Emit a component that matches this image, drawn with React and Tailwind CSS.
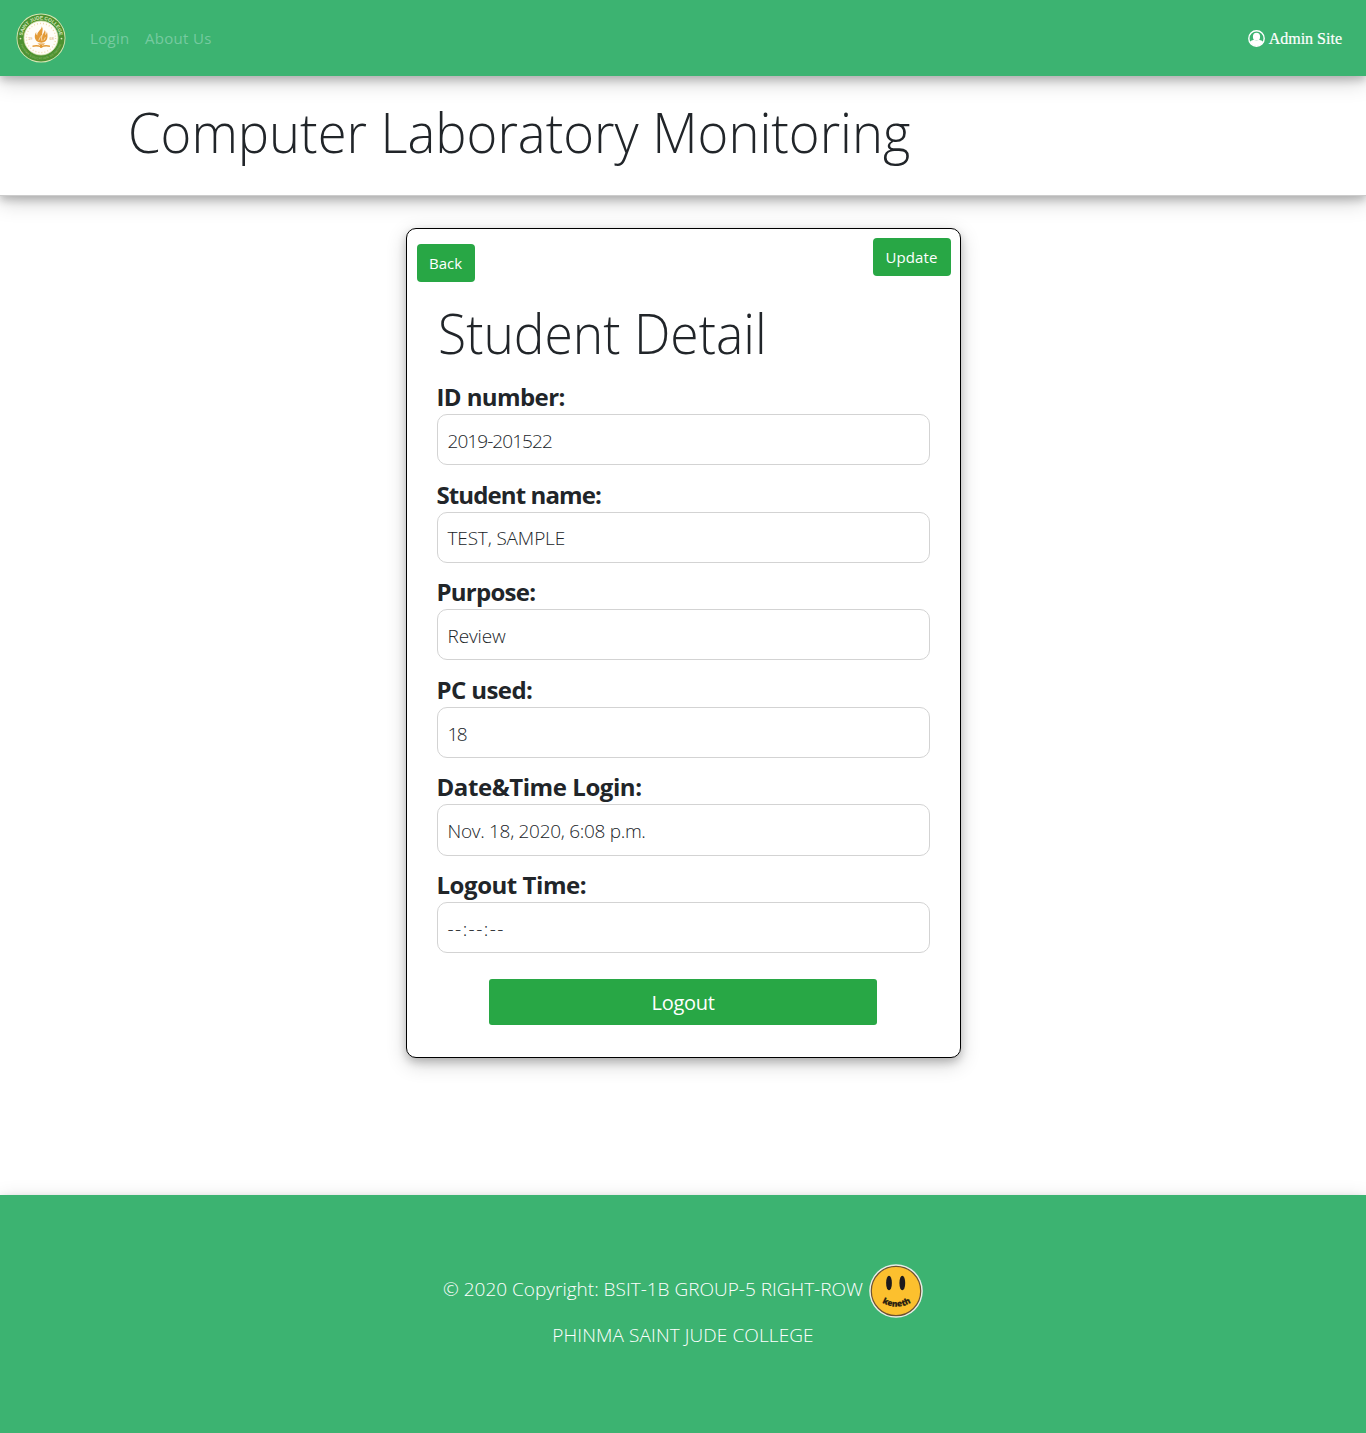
import React from "react";

const fields = [
  { label: "ID number:", value: "2019-201522", lw: "tracking-[-0.6px]", vw: "tracking-[-0.93px]" },
  { label: "Student name:", value: "TEST, SAMPLE", lw: "tracking-[-0.9px]", vw: "tracking-[-0.15px]" },
  { label: "Purpose:", value: "Review", lw: "tracking-[-0.75px]", vw: "tracking-[-0.15px]" },
  { label: "PC used:", value: "18", lw: "tracking-[-0.6px]", vw: "tracking-[-1.5px]" },
  { label: "Date&Time Login:", value: "Nov. 18, 2020, 6:08 p.m.", lw: "tracking-[-0.43px]", vw: "tracking-[-0.3px]" },
  { label: "Logout Time:", value: "--:--:--", lw: "tracking-[-0.45px]", vw: "tracking-[1.45px]" },
];

function CollegeSeal() {
  return (
    <svg viewBox="0 0 50 50" className="block size-[50px]" aria-label="Saint Jude College">
      <defs>
        <path id="seal-top" d="M6.6 27a18.500 18.500 0 1 1 36.800 0" />
        <path id="seal-bottom" d="M3.600 25a21.400 21.400 0 0 0 42.800 0" />
      </defs>
      <circle cx="25" cy="25" r="24.500" fill="#d9e6b4" />
      <circle cx="25" cy="25" r="23.600" fill="#4c9130" />
      <circle cx="25" cy="25" r="17" fill="#fffdf8" stroke="#d8dfae" strokeWidth=".8" />
      <circle cx="25" cy="25" r="14.600" fill="none" stroke="#f2dcb0" strokeWidth="1.400" strokeDasharray="1 2.06" />
      <text fontFamily="Liberation Sans" fontWeight="700" fontSize="5" fill="#d5e5ba">
        <textPath href="#seal-top" startOffset="50%" textAnchor="middle" textLength="53">SAINT JUDE COLLEGE</textPath>
      </text>
      <text fontFamily="Liberation Sans" fontSize="3" fill="#98bd76">
        <textPath href="#seal-bottom" startOffset="50%" textAnchor="middle" textLength="54">PHINMA EDUCATION NETWORK</textPath>
      </text>
      <circle cx="4.500" cy="25.600" r=".9" fill="#dbe8c0" />
      <circle cx="45.500" cy="25.600" r=".9" fill="#dbe8c0" />
      <g fill="#e39a36">
        <path d="M25.600 13.200c.8 3.200-5 5.200-4.300 9.300-1-.9-1.300-2-1-3.500-2 2.800-2.200 6.600.6 9.300 2.500 1.900 6.400 1.900 8.800-.2 2.500-2.500 2-6.500 1.200-9.500-.2 1.900-.9 2.900-1.700 3.600.6-2.300.4-4-.4-5.300-.4 2.300-1.800 3.500-2.600 5.600-.6-2.600 1.700-6.300-.6-9.300Z" />
        <path d="M21.500 30.500h7.800l-1.800 1.200h-4.200ZM16.500 32.600q5-1.200 8.700.6 3.700-1.800 8.700-.6v1.300q-5-1-8.700.7-3.700-1.700-8.700-.7Z" />
        <path d="M24 32h2.300v2.800H24Z" />
      </g>
      <path d="M22.700 27.500q1.200-3.200 3.300-5.300-1 3.200 0 5.700M27.700 27.300q1.200-1.200 1.600-3" stroke="#fff3dc" strokeWidth=".7" fill="none" />
      <text x="14.300" y="26.900" textAnchor="middle" fontFamily="Liberation Sans" fontSize="3.800" fill="#d9a860">19</text>
      <text x="35.700" y="26.900" textAnchor="middle" fontFamily="Liberation Sans" fontSize="3.800" fill="#d9a860">68</text>
    </svg>
  );
}

function AdminIcon() {
  return (
    <svg viewBox="0 0 17 17" className="block size-[17px]">
      <defs>
        <clipPath id="admin-clip">
          <circle cx="8.500" cy="8.500" r="7.600" />
        </clipPath>
      </defs>
      <circle cx="8.500" cy="8.500" r="7.700" fill="none" stroke="#fff" strokeWidth="1.400" />
      <ellipse cx="8.500" cy="6.700" rx="3.600" ry="3.900" fill="#fff" />
      <path clipPath="url(#admin-clip)" d="M1.500 17v-4.600q1-2.200 4.300-2.700 2.700 1.500 5.400 0 3.300.5 4.300 2.700V17Z" fill="#fff" />
    </svg>
  );
}

function Smiley() {
  return (
    <svg viewBox="0 0 54 54" className="block size-[54px]">
      <defs>
        <path id="smile" d="M11 37.500Q27.500 48 44 37.500" />
      </defs>
      <circle cx="27" cy="27" r="26.800" fill="#e9eee8" />
      <circle cx="27" cy="27" r="24.700" fill="#fcc02e" stroke="#6d5230" strokeWidth="1.200" />
      <ellipse cx="20" cy="19" rx="2.900" ry="7.300" fill="#1d1a1c" />
      <ellipse cx="33.300" cy="19" rx="2.900" ry="7.300" fill="#1d1a1c" />
      <text fontFamily="Open Sans" fontWeight="800" fontSize="8.300" fill="#29200f" stroke="#29200f" strokeWidth=".2">
        <textPath href="#smile" startOffset="50%" textAnchor="middle">keneth</textPath>
      </text>
    </svg>
  );
}

const shadow = "shadow-[0_4px_8px_0_rgba(0,0,0,0.2),0_6px_20px_0_rgba(0,0,0,0.19)]";

export default function App() {
  return (
    <div className="flex h-[1433px] w-full flex-col overflow-hidden bg-white font-['Open_Sans','Noto_Sans',sans-serif] text-[#212529]">
      <nav className={`relative z-10 flex h-[76px] shrink-0 items-center bg-[#3cb371] pl-4 pr-6 ${shadow}`}>
        <CollegeSeal />
        <div className="ml-6 flex gap-[15.5px] text-[15px] leading-6 tracking-[0.3px] text-[#76caa0]">
          <a>Login</a>
          <a>About Us</a>
        </div>
        <a className="ml-auto flex items-center gap-1 font-['Liberation_Serif',serif] text-[16px] text-white">
          <AdminIcon />
          <span className="pt-0.5 [-webkit-text-stroke:0.2px_white]">Admin Site</span>
        </a>
      </nav>

      <header className={`h-[120px] shrink-0 border-b border-[#cccccc] bg-white pl-32 pt-[22px] ${shadow}`}>
        <h1 className="origin-left scale-x-[0.938] whitespace-nowrap text-[56px] font-light leading-[67px]">Computer Laboratory Monitoring</h1>
      </header>

      <main className="flex grow justify-center pt-8">
        <section className={`flex h-[830px] w-[555px] flex-col rounded-[10px] border border-black bg-white ${shadow}`}>
          <div className="flex justify-between pl-[10px] pr-[9px] pt-[9px] text-[15px] text-white">
            <button className="mt-1.5 h-[38px] w-[58px] rounded bg-[#28a745]">Back</button>
            <button className="h-[38px] w-[78px] rounded bg-[#28a745] tracking-[0.1px]">Update</button>
          </div>
          <h2 className="ml-[31px] mt-[17px] origin-left scale-x-[0.921] whitespace-nowrap text-[56px] font-light leading-[67px]">Student Detail</h2>
          <div className="mx-[30px] mt-[13px] flex flex-col gap-[11.4px]">
            {fields.map((f) => (
              <div key={f.label}>
                <div className={`h-[35px] text-[24px] font-bold leading-9 ${f.lw}`}>{f.label}</div>
                <div className={`flex h-[51.2px] items-center rounded-[10px] border border-[#d3d3d3] px-[10px] pt-[3px] text-[19px] font-light ${f.vw}`}>
                  {f.value}
                </div>
              </div>
            ))}
          </div>
          <button className="mx-auto mt-[26px] h-[46px] w-[388px] rounded-[3px] bg-[#28a745] pt-0.5 text-[20px] tracking-[-0.3px] text-white">Logout</button>
        </section>
      </main>

      <footer className={`h-[238px] shrink-0 bg-[#3cb371] pt-[69px] text-[19px] font-light text-white ${shadow}`}>
        <div className="flex justify-center gap-1.5">
          <span className="whitespace-nowrap pt-[11px] leading-7">© 2020 Copyright: BSIT-1B GROUP-5 RIGHT-ROW</span>
          <Smiley />
        </div>
        <p className="mt-[3px] text-center leading-7 tracking-[0.1px]">PHINMA SAINT JUDE COLLEGE</p>
      </footer>
    </div>
  );
}
